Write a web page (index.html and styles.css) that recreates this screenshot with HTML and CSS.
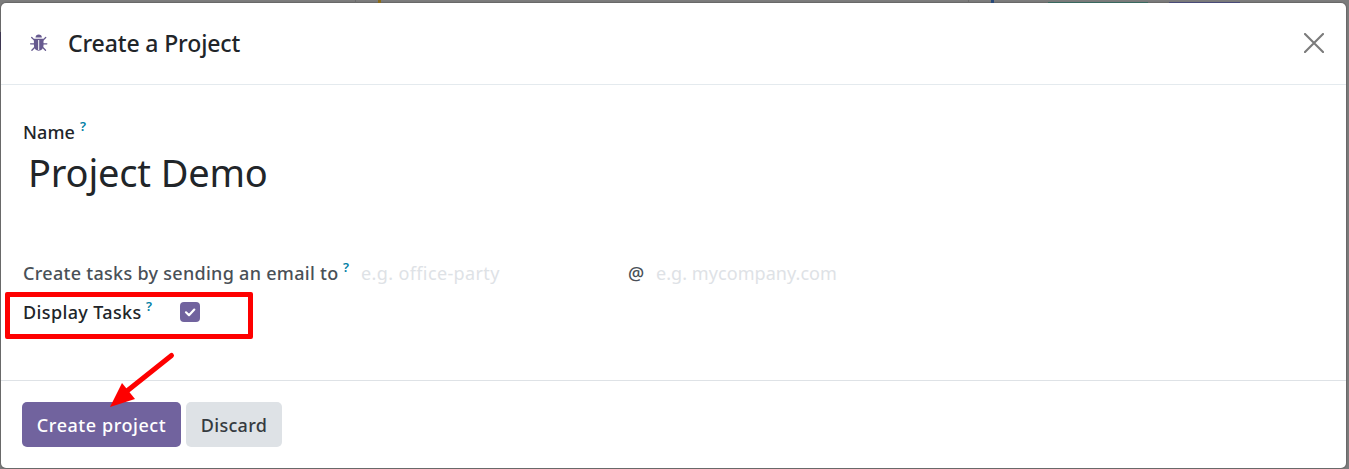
FILE: index.html
```html
<!DOCTYPE html>
<html lang="en">
<head>
<meta charset="utf-8">
<title>Create a Project</title>
<link rel="stylesheet" href="styles.css">
</head>
<body>
<div class="backdrop">
  <span class="bg-mark mark-line-a"></span>
  <span class="bg-mark mark-gold"></span>
  <span class="bg-mark mark-line-b"></span>
  <span class="bg-mark mark-blue"></span>
  <span class="bg-mark mark-teal"></span>
  <span class="bg-mark mark-indigo"></span>
  <span class="bg-mark mark-side"></span>
  <main class="dialog">
    <header class="dialog-header">
      <svg class="bug" viewBox="0 0 18 18" width="18" height="18" fill="#66598f">
        <path d="M5.500 3.500C5.500 1.400 6.900.4 8.700.4s3.200 1 3.200 3.100z"/>
        <path d="M3.900 4.800h9.600v6c0 3.800-2 5.900-4.800 5.900s-4.800-2.100-4.800-5.900z"/>
        <path d="M8.700 6v10" stroke="#fff" stroke-width="1"/>
        <path d="M4.600 6.400 1.700 3.500M12.800 6.400l2.900-2.900M4.300 9.800H.6M13.100 9.800h3.700M4.800 13.200l-2.900 3M12.600 13.200l2.900 3" fill="none" stroke="#66598f" stroke-width="1.300" stroke-linecap="round"/>
      </svg>
      <h1 class="title">Create a Project</h1>
      <svg class="close" viewBox="0 0 20 20" width="20" height="20"><path d="M1 1l18 18M19 1L1 19" stroke="#7b7b7b" stroke-width="2.100" stroke-linecap="round"/></svg>
    </header>
    <section class="dialog-body">
      <div class="row name-row"><label class="label name">Name</label><sup class="help">?</sup></div>
      <div class="project-name">Project Demo</div>
      <div class="row email-row">
        <label class="label alias">Create tasks by sending an email to</label><sup class="help">?</sup>
        <span class="placeholder party">e.g. office-party</span>
        <span class="label at">@</span>
        <span class="placeholder company">e.g. mycompany.com</span>
      </div>
      <div class="row tasks-row">
        <label class="label tasks">Display Tasks</label><sup class="help">?</sup>
        <span class="checkbox"><svg viewBox="0 0 20 20" width="20" height="20"><path d="M6 10.300l3 2.900 5.300-5.600" fill="none" stroke="#fff" stroke-width="2.200" stroke-linecap="round" stroke-linejoin="round"/></svg></span>
      </div>
    </section>
    <footer class="dialog-footer">
      <button class="btn primary"><span>Create project</span></button>
      <button class="btn secondary"><span>Discard</span></button>
    </footer>
  </main>
  <div class="highlight"></div>
  <svg class="arrow" viewBox="0 0 80 70" width="80" height="70"><path d="M71.500 15.500 L27 51" stroke="#fe0000" stroke-width="5" stroke-linecap="round"/><path d="M10 67 L22 43 L35 59 Z" fill="#fe0000"/></svg>
</div>
</body>
</html>
```

FILE: styles.css
```css
* { box-sizing: border-box; }
body { margin: 0; font-family: "Noto Sans", "Open Sans", sans-serif; color: #212529; }
.backdrop { position: relative; width: 1349px; height: 469px; padding: 3px 3px 1px 1px; background: #7c7c7c; overflow: hidden; }
.bg-mark { position: absolute; top: 0; height: 3px; }
.mark-line-a { left: 355px; width: 1px; background: #6b6b6b; }
.mark-gold { left: 378px; width: 3px; background: #8a6a18; }
.mark-line-b { left: 968px; width: 1px; background: #6b6b6b; }
.mark-blue { left: 991px; width: 3px; background: #294978; }
.mark-teal { left: 1048px; top: 2px; width: 100px; height: 1px; background: #37685f; }
.mark-indigo { left: 1169px; top: 2px; width: 71px; height: 1px; background: #484a78; }
.mark-side { left: 0; top: 32px; width: 1px; height: 18px; background: #3d3650; }
.dialog { display: flex; flex-direction: column; height: 465px; background: #fff; border-radius: 5px; box-shadow: 0 0 1px 1px #686868; }
.dialog-header { display: flex; align-items: center; height: 82px; padding: 0 22px 2px 29px; border-bottom: 1px solid #e4eaee; }
.bug { margin-right: 20px; }
.title { margin: 0; font-size: 23px; line-height: 32px; font-weight: 500; white-space: nowrap; letter-spacing: -.13px; }
.close { margin-left: auto; }
.dialog-body { height: 295px; padding: 34px 22px 0; }
.row { display: flex; align-items: center; height: 26px; white-space: nowrap; }
.label { font-size: 18px; line-height: 26px; font-weight: 500; }
.help { width: 8px; height: 26px; font-size: 13px; line-height: 15px; font-weight: 600; color: #0180a5; }
.name { width: 57px; letter-spacing: .1px; }
.project-name { height: 56px; padding-left: 5px; font-size: 38px; line-height: 55px; letter-spacing: -.17px; white-space: nowrap; }
.email-row { margin-top: 59px; }
.alias { width: 320px; color: #495057; letter-spacing: .29px; }
.placeholder { font-size: 18px; line-height: 26px; color: #dee2e6; }
.party { width: 267px; margin-left: 10px; letter-spacing: .38px; }
.company { letter-spacing: .06px; }
.at { width: 28px; color: #495057; }
.tasks-row { margin-top: 13px; }
.tasks { width: 123px; letter-spacing: .37px; }
.checkbox { width: 20px; height: 20px; margin-left: 26px; border-radius: 4px; background: #71639e; }
.checkbox svg { display: block; }
.dialog-footer { display: flex; gap: 5px; height: 88px; padding: 21px; border-top: 1px solid #dee2e6; }
.btn { height: 45px; padding: 0; border: 0; border-radius: 5px; font: 500 18px/26px "Noto Sans", "Open Sans", sans-serif; white-space: nowrap; }
.primary { width: 159px; background: #71639e; color: #fff; letter-spacing: .55px; }
.secondary { width: 96px; background: #dee2e6; color: #353a40; letter-spacing: .3px; }
.highlight { position: absolute; left: 5px; top: 292px; width: 248px; height: 47px; border: 5px solid #fe0000; border-radius: 2px; }
.arrow { position: absolute; left: 100px; top: 340px; }
```
